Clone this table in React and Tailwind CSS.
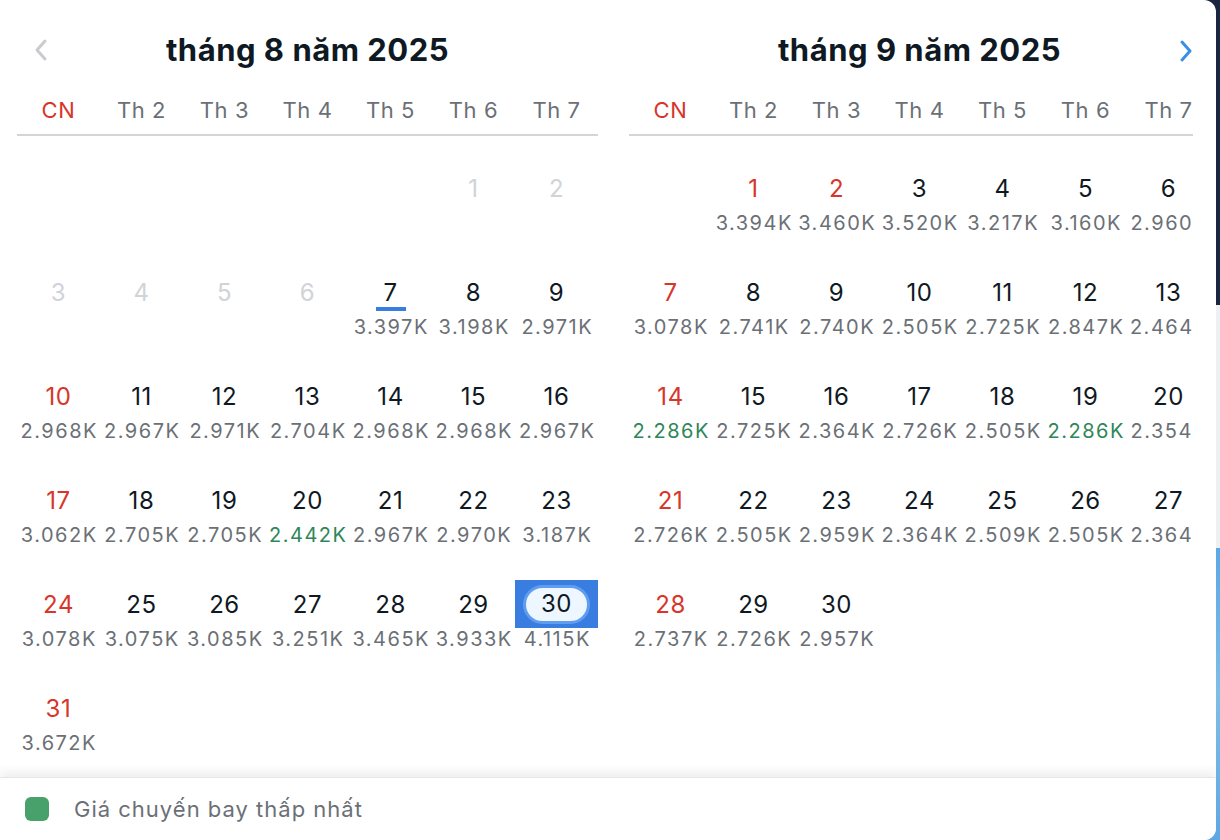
import React from "react";

const WEEK = ["CN", "Th 2", "Th 3", "Th 4", "Th 5", "Th 6", "Th 7"];

const AUG = {
  title: "tháng 8 năm 2025",
  offset: 5,
  days: 31,
  disabledUntil: 6,
  red: [],
  green: [20],
  selected: 30,
  today: 7,
  prices: {
    7: "3.397K", 8: "3.198K", 9: "2.971K",
    10: "2.968K", 11: "2.967K", 12: "2.971K", 13: "2.704K", 14: "2.968K", 15: "2.968K", 16: "2.967K",
    17: "3.062K", 18: "2.705K", 19: "2.705K", 20: "2.442K", 21: "2.967K", 22: "2.970K", 23: "3.187K",
    24: "3.078K", 25: "3.075K", 26: "3.085K", 27: "3.251K", 28: "3.465K", 29: "3.933K", 30: "4.115K",
    31: "3.672K",
  },
};

const SEP = {
  title: "tháng 9 năm 2025",
  offset: 1,
  days: 30,
  disabledUntil: 0,
  red: [1, 2],
  green: [14, 19],
  selected: null,
  today: null,
  prices: {
    1: "3.394K", 2: "3.460K", 3: "3.520K", 4: "3.217K", 5: "3.160K", 6: "2.960K",
    7: "3.078K", 8: "2.741K", 9: "2.740K", 10: "2.505K", 11: "2.725K", 12: "2.847K", 13: "2.464K",
    14: "2.286K", 15: "2.725K", 16: "2.364K", 17: "2.726K", 18: "2.505K", 19: "2.286K", 20: "2.354K",
    21: "2.726K", 22: "2.505K", 23: "2.959K", 24: "2.364K", 25: "2.509K", 26: "2.505K", 27: "2.364K",
    28: "2.737K", 29: "2.726K", 30: "2.957K",
  },
};

function DayCell({ m, d, col }) {
  const disabled = d <= m.disabledUntil;
  const isRed = !disabled && (col === 0 || m.red.includes(d));
  const numColor = disabled ? "text-[#d0d3d7]" : isRed ? "text-[#d7362a]" : "text-[#0f1923]";
  const isSel = m.selected === d;
  const isToday = m.today === d;
  const price = m.prices[d];
  const priceColor = m.green.includes(d) ? "text-[#2f8658]" : "text-[#6b7076]";
  return (
    <div className="flex flex-col items-center h-[104px]">
      {isSel ? (
        <div className="w-full h-[48px] bg-[#3a7de0] flex items-center justify-center">
          <div className="w-[67px] h-[39px] rounded-full bg-[#eef6ff] border-[3px] border-[#5f9df0] flex items-center justify-center text-[24px] leading-none tracking-[0.6px] text-[#0f1923]">
            {d}
          </div>
        </div>
      ) : (
        <div className={`relative w-full h-[48px] flex items-center justify-center text-[24px] leading-none tracking-[0.6px] pt-[2px] ${numColor}`}>
          {d}
          {isToday && (
            <span className="absolute left-1/2 -translate-x-1/2 top-[39px] w-[30px] h-[4px] bg-[#3a7de0]" />
          )}
        </div>
      )}
      {price && (
        <div className={`h-[22px] leading-[22px] text-[20px] whitespace-nowrap tracking-[1.5px] pl-[1.5px] ${priceColor}`}>
          {price}
        </div>
      )}
    </div>
  );
}

function Month({ m, left }) {
  const cells = [];
  for (let i = 0; i < m.offset; i++) cells.push(null);
  for (let d = 1; d <= m.days; d++) cells.push(d);
  return (
    <div className="w-[581px] shrink-0">
      <div className="relative h-[98px] flex items-center justify-center pt-[2px]">
        {left && (
          <svg className="absolute left-[16px] top-[38px]" width="16" height="24" viewBox="0 0 16 24" fill="none">
            <path d="M12 3 L4 12 L12 21" stroke="#c9cbce" strokeWidth="3" strokeLinecap="round" strokeLinejoin="round" />
          </svg>
        )}
        <div className="text-[31px] font-bold text-[#0f1923] tracking-[0.5px]">{m.title}</div>
      </div>
      <div className="grid grid-cols-7 h-[38px] border-b-2 border-[#d3d5d8]">
        {WEEK.map((w, i) => (
          <div
            key={w}
            className={`text-center h-[24px] leading-[24px] text-[22px] tracking-[0.6px] ${i === 0 ? "text-[#d7362a]" : "text-[#6b7076]"}`}
          >
            {w}
          </div>
        ))}
      </div>
      <div className="grid grid-cols-7 pt-[28px]">
        {cells.map((d, i) =>
          d === null ? <div key={"e" + i} className="h-[104px]" /> : <DayCell key={d} m={m} d={d} col={i % 7} />
        )}
      </div>
    </div>
  );
}

export default function App() {
  return (
    <div className="flex w-[1220px] h-[840px] overflow-hidden" style={{ fontFamily: "Inter, 'Noto Sans', sans-serif" }}>
      <div className="relative w-[1216px] h-[840px] bg-white rounded-r-[12px] flex flex-col overflow-hidden z-10">
        <div className="h-[777px] overflow-hidden pl-[17px]">
          <div className="w-[1176px] overflow-hidden">
            <div className="flex gap-[31px] w-max">
              <Month m={AUG} left />
              <Month m={SEP} />
            </div>
          </div>
        </div>
        <svg className="absolute left-[1178px] top-[39px]" width="16" height="24" viewBox="0 0 16 24" fill="none">
          <path d="M4 3 L12 12 L4 21" stroke="#3a8ee8" strokeWidth="3" strokeLinecap="round" strokeLinejoin="round" />
        </svg>
        <div className="relative h-[63px] bg-white flex items-center pl-[25px] gap-[25px] shadow-[0_-5px_10px_rgba(0,0,0,0.07)] border-t border-[#e6e7e9]">
          <div className="w-[24px] h-[24px] rounded-[6px] bg-[#48a16b]" />
          <div className="text-[22px] tracking-[1px] text-[#6b7076]">Giá chuyến bay thấp nhất</div>
        </div>
      </div>
      <div className="w-[4px] flex flex-col -ml-[12px]">
        <div className="h-[305px] w-[16px] bg-[#1b2740]" />
        <div className="h-[243px] w-[16px] bg-[#eef0f2]" />
        <div className="flex-1 w-[16px] bg-gradient-to-b from-[#5aa8e6] via-[#7fbde6] to-[#5ea7e3]" />
      </div>
    </div>
  );
}
